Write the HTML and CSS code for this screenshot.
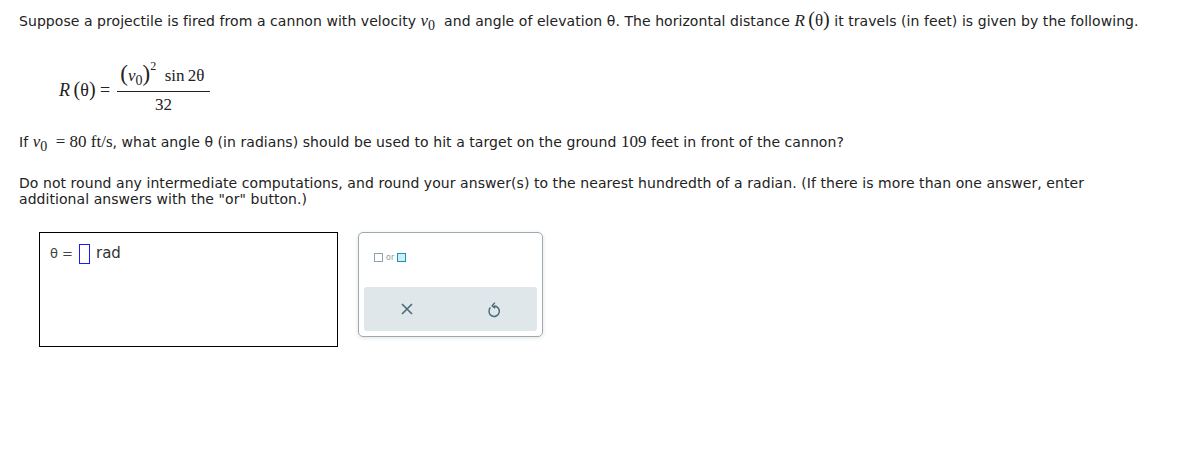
FILE: index.html
```html
<!DOCTYPE html>
<html>
<head>
<meta charset="utf-8">
<link rel="stylesheet" href="styles.css">
</head>
<body>
<div class="page">
  <p class="line first">Suppose a projectile is fired from a cannon with velocity <span class="m"><i>v</i><sub>0</sub></span>&nbsp; and angle of elevation θ. The horizontal distance <span class="m"><i>R</i>&thinsp;<span class="bp">(</span>θ<span class="bp">)</span></span> it travels (in feet) is given by the following.</p>

  <div class="formula m">
    <span class="lhs"><i>R</i>&thinsp;<span class="bp">(</span>θ<span class="bp">)</span> =</span>
    <span class="frac">
      <span class="num"><span class="paren">(</span><i>v</i><sub>0</sub><span class="paren">)</span><sup>2</sup>&nbsp; sin&thinsp;2θ</span>
      <span class="den">32</span>
    </span>
  </div>

  <p class="line q">If <span class="m"><i>v</i><sub>0</sub> &nbsp;= 80 ft/s</span>, what angle θ (in radians) should be used to hit a target on the ground <span class="m">109</span> feet in front of the cannon?</p>

  <p class="line inst">Do not round any intermediate computations, and round your answer(s) to the nearest hundredth of a radian. (If there is more than one answer, enter additional answers with the "or" button.)</p>

  <div class="answer-row">
    <div class="answer-box">
      <span class="theta">θ =</span>
      <span class="input"></span>
      <span class="unit">rad</span>
    </div>
    <div class="palette">
      <div class="or-row">
        <span class="sq"></span><span class="or">or</span><span class="sq blue"></span>
      </div>
      <div class="actions">
        <svg class="icon" width="14" height="14" viewBox="0 0 14 14"><path d="M2 2L12 12M12 2L2 12" stroke="#4a6b78" stroke-width="1.6" fill="none"/></svg>
        <svg class="icon" width="14" height="17" viewBox="0 0 14 17"><path d="M3.4 6.6A5.2 5.2 0 1 0 7 5" stroke="#4a6b78" stroke-width="1.5" fill="none"/><path d="M7.8 1.6L5.2 4.8L8.2 7.2" stroke="#4a6b78" stroke-width="1.5" fill="none"/></svg>
      </div>
    </div>
  </div>
</div>
</body>
</html>
```

FILE: styles.css
```css
html, body {
  margin: 0;
  padding: 0;
  background: #fff;
}
.page {
  padding: 13px 19px;
  font-family: "DejaVu Sans", Verdana, sans-serif;
  font-size: 14px;
  letter-spacing: 0.06px;
  color: #222;
  width: 1125px;
}
.line {
  margin: 0;
  line-height: 16px;
}
.m {
  font-family: "Liberation Serif", "Times New Roman", serif;
  font-size: 17px;
  letter-spacing: 0;
}
.m sub {
  font-size: 14px;
  vertical-align: -4px;
  line-height: 0;
}
.m sup {
  font-size: 12px;
  vertical-align: 11px;
  line-height: 0;
}
.bp {
  font-size: 20px;
  line-height: 0;
}
.formula {
  display: flex;
  align-items: center;
  margin: 32px 0 0 40px;
  height: 56px;
  font-size: 18px;
}
.lhs {
  margin-right: 7px;
  padding-top: 2px;
}
.frac {
  display: inline-flex;
  flex-direction: column;
  align-items: center;
}
.num {
  padding: 0 5px 4px 3px;
  border-bottom: 1px solid #222;
  font-size: 17px;
  line-height: 22px;
}
.paren {
  font-size: 23px;
}
.den {
  padding-top: 2px;
  line-height: 22px;
  font-size: 17px;
}
.q {
  margin-top: 17px;
}
.inst {
  margin-top: 25px;
}
.answer-row {
  display: flex;
  align-items: flex-start;
  gap: 20px;
  margin: 25px 0 0 20px;
  letter-spacing: 0;
}
.answer-box {
  width: 297px;
  height: 113px;
  border: 1px solid #000;
  display: flex;
  align-items: flex-start;
}
.answer-box .theta {
  margin: 13px 0 0 10px;
  font-size: 13px;
  color: #444;
}
.answer-box .input {
  display: inline-block;
  width: 9px;
  height: 18px;
  border: 1px solid #1a1aff;
  margin: 11px 0 0 6px;
}
.answer-box .unit {
  margin: 11px 0 0 6px;
  font-size: 15px;
  color: #333;
}
.palette {
  width: 173px;
  height: 98px;
  border: 1px solid #9aaab0;
  border-radius: 5px;
  box-shadow: 0 1px 4px rgba(0,0,0,0.12);
  display: flex;
  flex-direction: column;
  padding: 0 5px 5px;
}
.or-row {
  display: flex;
  align-items: center;
  gap: 3px;
  height: 54px;
  padding: 0 0 5px 10px;
  box-sizing: border-box;
}
.sq {
  width: 7px;
  height: 7px;
  border: 1.5px solid #8fa3ab;
  background: #fff;
}
.sq.blue {
  border-color: #1895b3;
  background: #cfeef6;
}
.or {
  font-family: "DejaVu Sans", sans-serif;
  font-size: 8px;
  color: #8a9aa2;
}
.actions {
  flex: 1;
  background: #e0e7ea;
  border-radius: 3px;
  display: flex;
  align-items: center;
  justify-content: space-around;
}
```
